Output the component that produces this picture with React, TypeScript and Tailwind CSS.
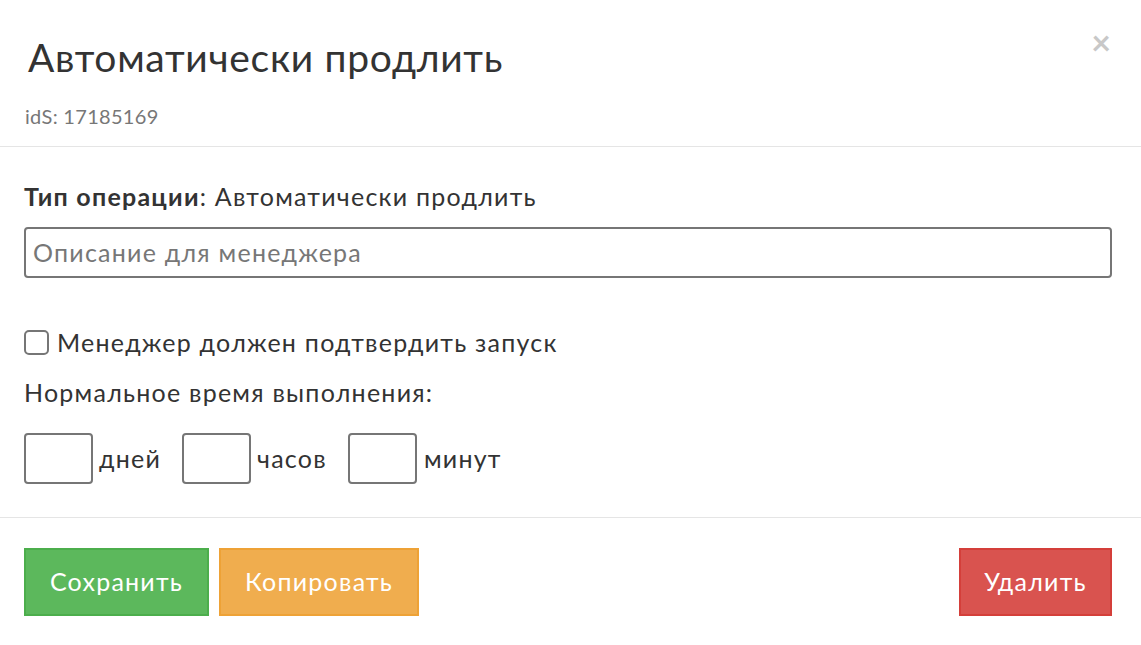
import React from "react";

export default function App() {
  const font = { fontFamily: "Lato, 'Open Sans', sans-serif" };
  return (
    <div className="w-[1141px] h-[645px] bg-white text-[#333] overflow-hidden" style={font}>
      <div className="relative border-b border-[#e5e5e5] h-[147px] pl-[25px] pt-[27px]">
        <h4 className="text-[39px] leading-[60px] font-normal tracking-[0.7px] text-[#333] pl-[3px]">Автоматически продлить</h4>
        <div className="mt-[17px] text-[20px] leading-[24px] tracking-[0.3px] text-[#777]">idS: 17185169</div>
        <button className="absolute right-[30px] top-[25px] text-[34px] leading-[34px] font-bold text-[#c8c8c8]">×</button>
      </div>
      <div className="pl-[24px] pr-[29px] pt-[33px] h-[371px] border-b border-[#e5e5e5] text-[25px] tracking-[1.24px]">
        <div className="leading-[32px]">
          <b className="font-bold">Тип операции</b>: Автоматически продлить
        </div>
        <div className="mt-[15px] h-[51px] w-[1088px] border-2 border-[#767676] rounded-[4px] flex items-center px-[7px] text-[#777]">
          Описание для менеджера
        </div>
        <div className="mt-[48px] flex items-center gap-[8px] leading-[32px]">
          <span className="w-[25px] h-[25px] border-2 border-[#767676] rounded-[5px] inline-block"></span>
          <span>Менеджер должен подтвердить запуск</span>
        </div>
        <div className="mt-[18px] leading-[32px]">Нормальное время выполнения:</div>
        <div className="mt-[25px] flex items-center">
          <span className="w-[69px] h-[51px] border-2 border-[#767676] rounded-[4px] inline-block"></span>
          <span className="ml-[6px] mr-[21px]">дней</span>
          <span className="w-[69px] h-[51px] border-2 border-[#767676] rounded-[4px] inline-block"></span>
          <span className="ml-[6px] mr-[21px]">часов</span>
          <span className="w-[69px] h-[51px] border-2 border-[#767676] rounded-[4px] inline-block"></span>
          <span className="ml-[7px]">минут</span>
        </div>
      </div>
      <div className="flex items-start pl-[24px] pr-[29px] pt-[30px] text-[25px] tracking-[1.24px]">
        <button className="h-[68px] w-[185px] bg-[#5cb85c] border-2 border-[#4cae4c] text-white">Сохранить</button>
        <button className="ml-[10px] h-[68px] w-[200px] bg-[#f0ad4e] border-2 border-[#eea236] text-white">Копировать</button>
        <button className="ml-auto h-[68px] w-[153px] bg-[#d9534f] border-2 border-[#d43f3a] text-white">Удалить</button>
      </div>
    </div>
  );
}
